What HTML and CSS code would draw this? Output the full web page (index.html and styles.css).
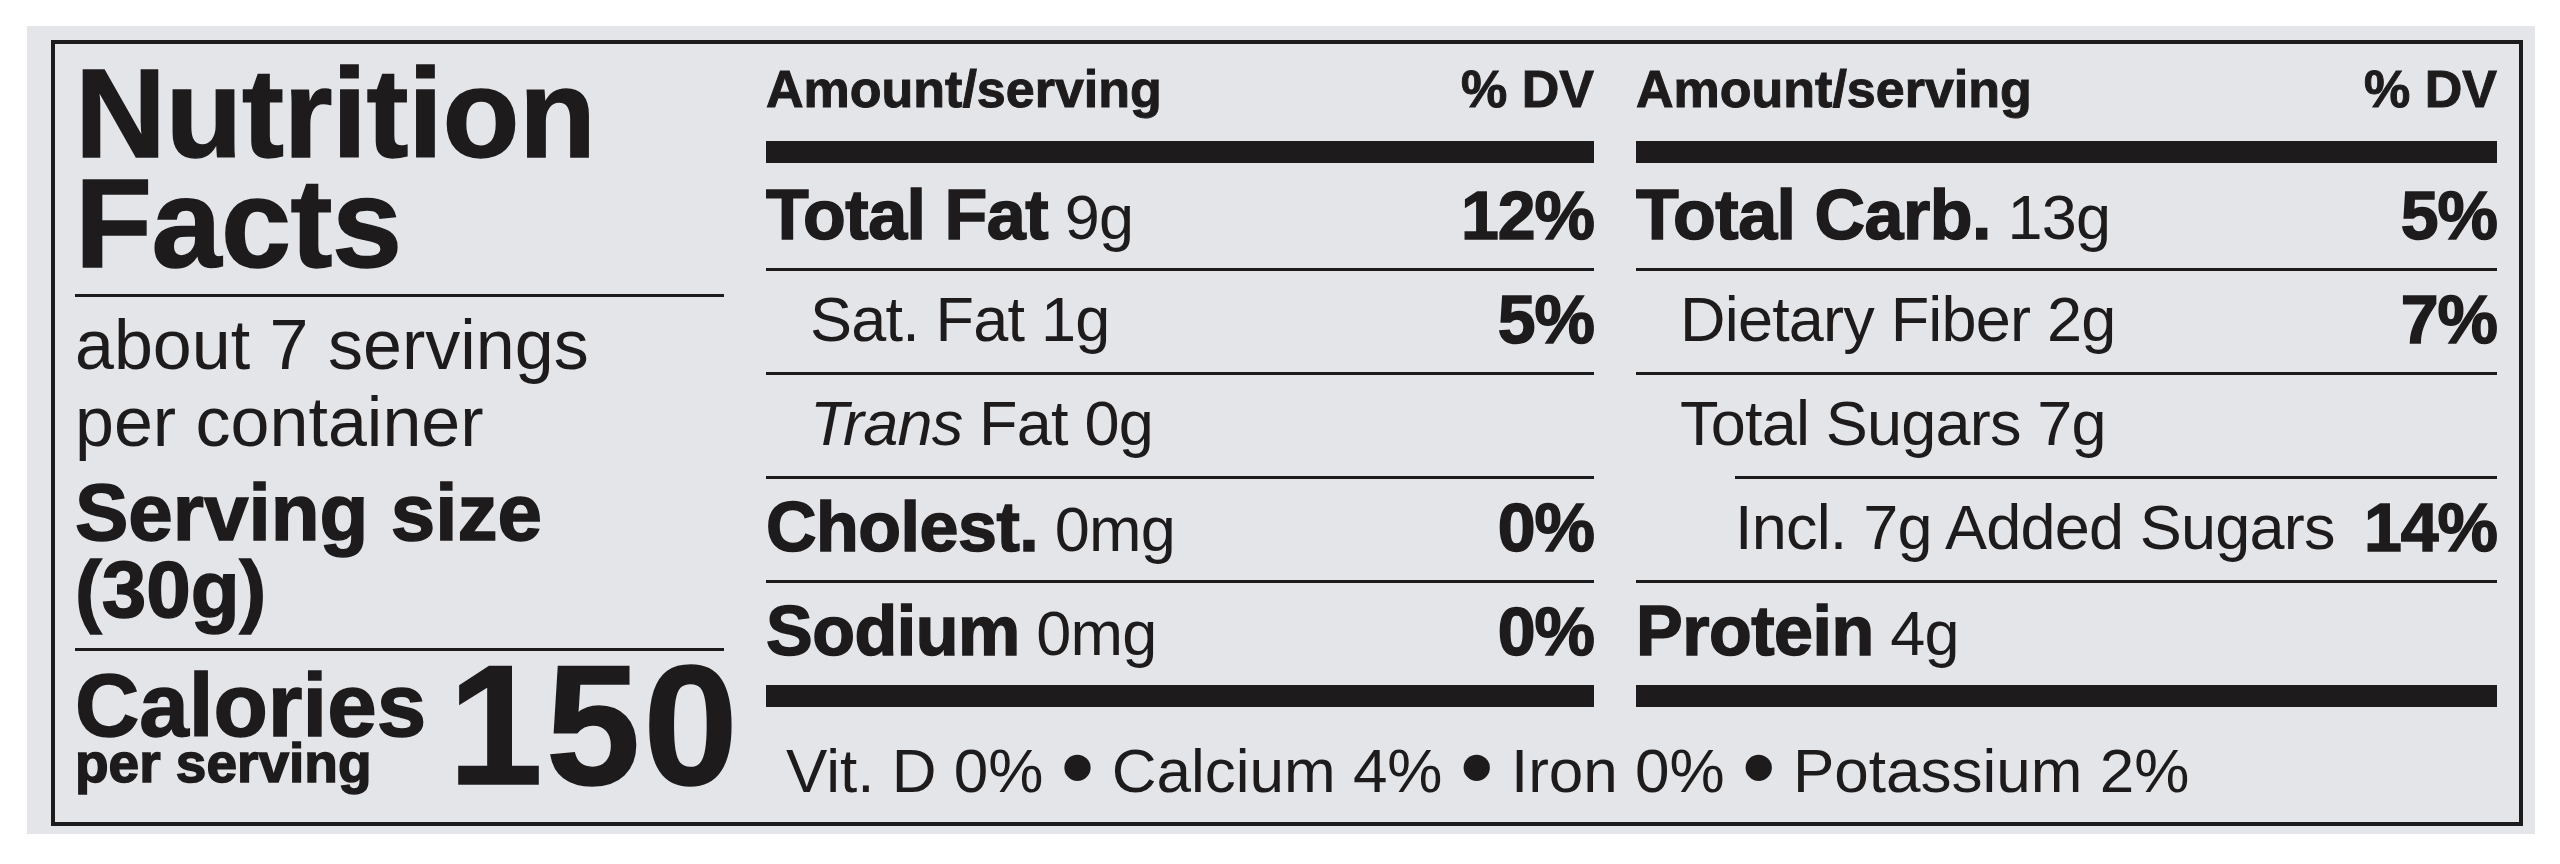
FILE: index.html
```html
<!DOCTYPE html>
<html lang="en">
<head>
  <meta charset="UTF-8" />
  <meta name="viewport" content="width=device-width, initial-scale=1.0"/>
  <title>Nutrition Facts</title>
  <link rel="stylesheet" href="styles.css">
</head>
<body>

  <div class="panel">
    <div class="label">

      <div class="summary">
        <h1 class="title">Nutrition<br>Facts</h1>
        <p class="servings">about 7 servings<br>per container</p>
        <p class="size">Serving size<br>(30g)</p>
        <div class="calories">
          <div class="cal-name">
            <strong>Calories</strong>
            <span>per serving</span>
          </div>
          <div class="cal-value">150</div>
        </div>
      </div>

      <div class="facts">
        <div class="head"><span>Amount/serving</span><span>% DV</span></div>
        <div class="row first">
          <span class="name"><b>Total Fat</b> 9g</span><b class="dv">12%</b>
        </div>
        <div class="row sub">
          <span class="name">Sat. Fat 1g</span><b class="dv">5%</b>
        </div>
        <div class="row sub">
          <span class="name"><i>Trans</i> Fat 0g</span>
        </div>
        <div class="row">
          <span class="name"><b>Cholest.</b> 0mg</span><b class="dv">0%</b>
        </div>
        <div class="row">
          <span class="name"><b>Sodium</b> 0mg</span><b class="dv">0%</b>
        </div>
      </div>

      <div class="facts">
        <div class="head"><span>Amount/serving</span><span>% DV</span></div>
        <div class="row first">
          <span class="name"><b>Total Carb.</b> 13g</span><b class="dv">5%</b>
        </div>
        <div class="row sub">
          <span class="name">Dietary Fiber 2g</span><b class="dv">7%</b>
        </div>
        <div class="row sub sugars">
          <span class="name">Total Sugars 7g</span>
        </div>
        <div class="row added">
          <span class="name">Incl. 7g Added Sugars</span><b class="dv">14%</b>
        </div>
        <div class="row">
          <span class="name"><b>Protein</b> 4g</span>
        </div>
      </div>

      <p class="vitamins">Vit. D 0% <span class="dot">•</span> Calcium 4% <span class="dot">•</span> Iron 0% <span class="dot">•</span> Potassium 2%</p>

    </div>
  </div>

</body>
</html>
```

FILE: styles.css
```css
body {
  margin: 0;
  background: #fff;
  color: #1d1b1c;
  font-family: "Liberation Sans", Arial, sans-serif;
}

.panel {
  width: 2508px;
  margin: 26px 0 0 27px;
  padding: 14px 12px 8px 24px;
  box-sizing: border-box;
  background: #e4e5e9;
}

.label {
  display: grid;
  grid-template-columns: 649px 828px 1fr;
  column-gap: 42px;
  padding: 15px 22px 16px 20px;
  border: 4px solid #1d1b1c;
}

/* heavy face like the printed label */
.title, .size, .cal-name, .cal-value, .head, .name b, .dv {
  -webkit-text-stroke: 1.5px #1d1b1c;
}

/* left column */
.summary { grid-row: 1 / 3; }

.title {
  margin: 0;
  padding-bottom: 15px;
  border-bottom: 3px solid;
  font-size: 126px;
  line-height: 110px;
  font-weight: bold;
  letter-spacing: -0.5px;
}
.servings {
  margin: 10px 0 0;
  font-size: 70px;
  line-height: 77px;
}
.size {
  margin: 13px 0 0;
  padding-bottom: 20px;
  border-bottom: 3px solid;
  font-size: 80px;
  line-height: 77px;
  font-weight: bold;
}
.calories {
  display: flex;
  align-items: flex-end;
  gap: 22px;
  margin-top: 15px;
}
.cal-name strong {
  display: block;
  font-size: 89px;
  line-height: 76px;
}
.cal-name span {
  display: block;
  font-size: 55px;
  line-height: 41px;
  font-weight: bold;
}
.cal-value {
  font-size: 170px;
  line-height: 118px;
  font-weight: bold;
  letter-spacing: 3px;
}

/* nutrient tables */
.facts {
  font-size: 70px;
  line-height: 70px;
}
.head {
  display: flex;
  justify-content: space-between;
  padding-bottom: 22px;
  border-bottom: 22px solid;
  font-size: 52px;
  line-height: 60px;
  font-weight: bold;
}
.head span { -webkit-text-stroke: 1px #1d1b1c; }
.row {
  display: flex;
  justify-content: space-between;
  height: 104px;
  box-sizing: border-box;
  padding-top: 13px;
  border-bottom: 3px solid;
}
.row.first { margin-top: 4px; }
.row:last-child {
  height: 124px;
  border-bottom-width: 22px;
}
.row.sub { padding-left: 44px; }
.row.sugars {
  border-bottom-color: transparent;
  background: linear-gradient(#1d1b1c, #1d1b1c) right bottom / calc(100% - 99px) 3px no-repeat;
  background-origin: border-box;
}
.row.added { padding-left: 99px; }

.name {
  font-size: 63px;
  letter-spacing: -0.8px;
}
.name b {
  font-size: 70px;
  letter-spacing: -0.5px;
}
.dv {
  font-size: 68px;
  letter-spacing: -1px;
}

.vitamins {
  grid-column: 2 / 4;
  margin: 29px 0 0;
  padding-left: 20px;
  font-size: 62px;
  line-height: 70px;
}
.dot {
  font-size: 97px;
  line-height: 0;
  vertical-align: -8px;
}
```
